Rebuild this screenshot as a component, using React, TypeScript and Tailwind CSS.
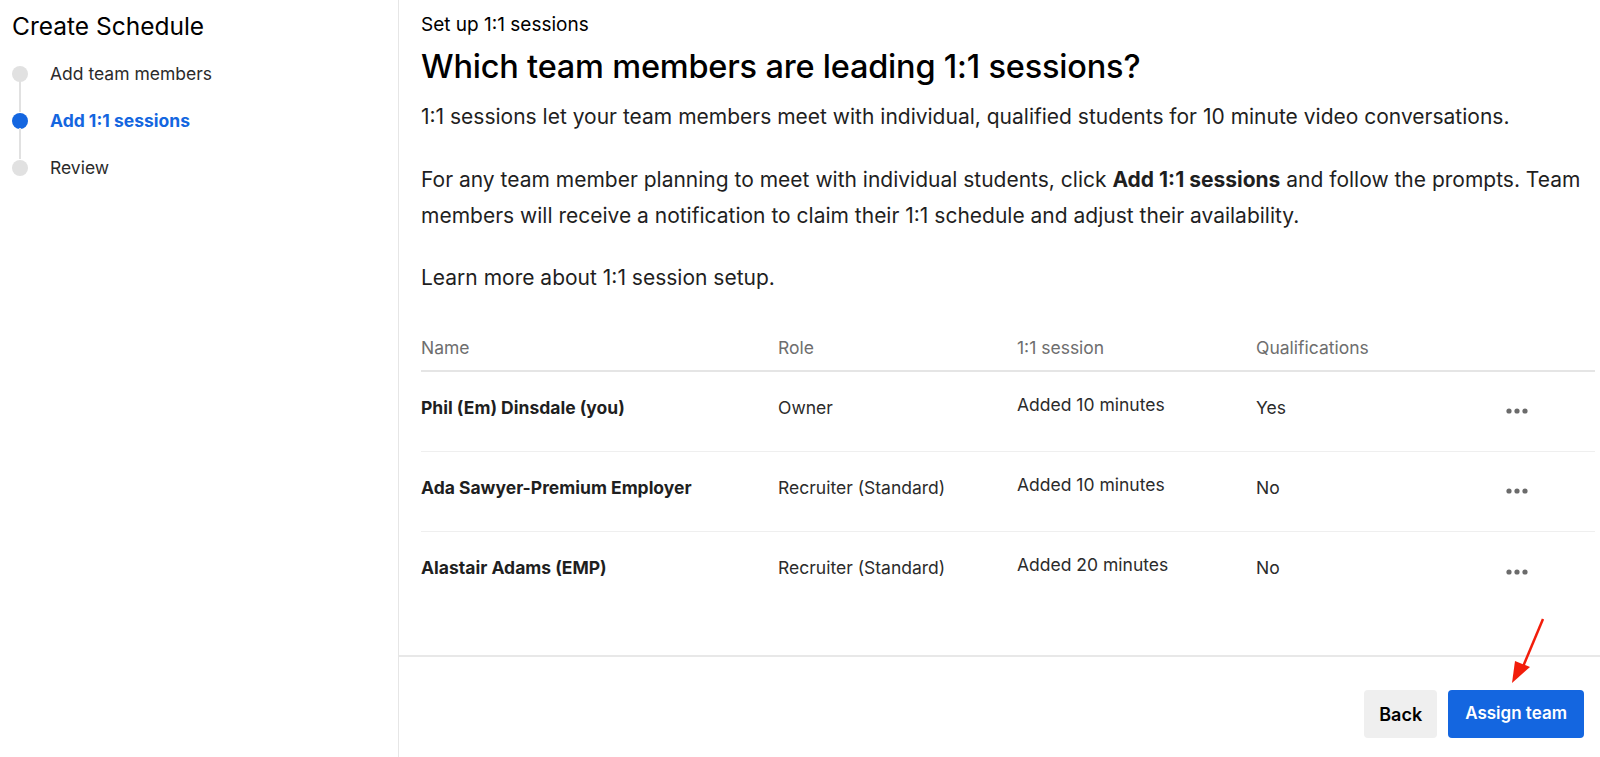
const steps = [
  { label: "Add team members", active: false },
  { label: "Add 1:1 sessions", active: true },
  { label: "Review", active: false },
];

const members = [
  { name: "Phil (Em) Dinsdale (you)", role: "Owner", session: "Added 10 minutes", qualified: "Yes" },
  { name: "Ada Sawyer-Premium Employer", role: "Recruiter (Standard)", session: "Added 10 minutes", qualified: "No" },
  { name: "Alastair Adams (EMP)", role: "Recruiter (Standard)", session: "Added 20 minutes", qualified: "No" },
];

const MoreDots = () => (
  <svg width="22" height="6" viewBox="0 0 22 6" fill="#6b6b6b">
    <circle cx="3" cy="3" r="2.6" />
    <circle cx="11" cy="3" r="2.6" />
    <circle cx="19" cy="3" r="2.6" />
  </svg>
);

const App = () => {
  return (
    <div className="flex h-[757px] w-full bg-white text-[#1f1f1f] font-['Inter','Noto_Sans',sans-serif]">
      {/* Sidebar */}
      <aside className="w-[399px] shrink-0 border-r border-[#e6e6e6] pl-[12px] pt-[10px]">
        <h1 className="text-[24.5px] leading-[32px] text-black">Create Schedule</h1>
        <ol className="mt-[8px]">
          {steps.map((step, i) => (
            <li key={step.label} className="relative flex h-[47px] items-center">
              <span className={`h-[16px] w-[16px] shrink-0 rounded-full ${step.active ? "bg-[#1466e0]" : "bg-[#e1e1e1]"}`} />
              {i < steps.length - 1 && (
                <span className="absolute left-[7px] top-[31px] h-[31px] w-[2px] bg-[#e1e1e1]" />
              )}
              <span
                className={`ml-[22px] text-[17.5px] leading-[24px] ${
                  step.active ? "font-bold text-[#1466e0]" : "text-[#2b2b2b]"
                }`}
              >
                {step.label}
              </span>
            </li>
          ))}
        </ol>
      </aside>

      {/* Main */}
      <main className="flex flex-1 flex-col">
        <div className="flex-1 pl-[22px] pr-[5px] pt-[11px]">
          <p className="text-[19px] leading-[28px] text-black">Set up 1:1 sessions</p>
          <h2 className="mt-[8px] text-[32.5px] font-medium leading-[40px] tracking-[-0.2px] text-black">
            Which team members are leading 1:1 sessions?
          </h2>
          <div className="mt-[12px] text-[21px] leading-[36px] text-[#1f1f1f]">
            <p>1:1 sessions let your team members meet with individual, qualified students for 10 minute video conversations.</p>
            <p className="mt-[27px]">
              For any team member planning to meet with individual students, click <b className="font-bold">Add 1:1 sessions</b> and follow the
              prompts. Team
              <br />
              members will receive a notification to claim their 1:1 schedule and adjust their availability.
            </p>
            <p className="mt-[26px]">Learn more about 1:1 session setup.</p>
          </div>

          {/* Table */}
          <div className="mt-[31px] text-[17.5px]">
            <div className="grid h-[45px] grid-cols-[357px_239px_239px_250px_1fr] items-center border-b-2 border-[#e5e5e5] text-[#6e6e6e]">
              <span>Name</span>
              <span>Role</span>
              <span>1:1 session</span>
              <span>Qualifications</span>
              <span />
            </div>
            {members.map((m, i) => (
              <div
                key={m.name}
                className={`grid h-[80px] grid-cols-[357px_239px_239px_250px_1fr] items-center pb-[7px] ${
                  i < members.length - 1 ? "border-b border-[#efefef]" : ""
                }`}
              >
                <span className="font-bold text-[#1f1f1f]">{m.name}</span>
                <span className="text-[#2b2b2b]">{m.role}</span>
                <span className="-mt-[6px] text-[#2b2b2b]">{m.session}</span>
                <span className="text-[#2b2b2b]">{m.qualified}</span>
                <span className="pt-[6px]">
                  <MoreDots />
                </span>
              </div>
            ))}
          </div>
        </div>

        {/* Footer */}
        <footer className="relative flex h-[102px] shrink-0 justify-end gap-[11px] border-t-2 border-[#e8e8e8] pr-[16px] pt-[33px]">
          <button className="h-[48px] rounded-[4px] bg-[#efefef] px-[15px] text-[18px] font-semibold text-black">Back</button>
          <button className="h-[48px] rounded-[4px] bg-[#1466e0] px-[17px] text-[17px] font-semibold text-white">Assign team</button>
          <svg className="pointer-events-none absolute right-[52px] top-[-40px]" width="40" height="70" viewBox="0 0 40 70">
            <line x1="35" y1="2" x2="14" y2="52" stroke="#f21d0b" strokeWidth="2.5" />
            <polygon points="4,66 7,44 22,50" fill="#f21d0b" />
          </svg>
        </footer>
      </main>
    </div>
  );
};

export default App;
